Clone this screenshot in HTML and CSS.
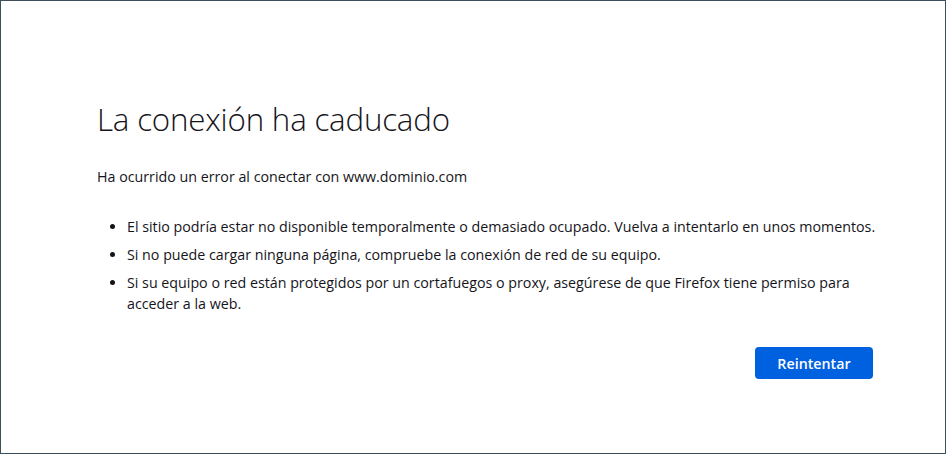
FILE: index.html
```html
<!DOCTYPE html>
<html lang="es">
<head>
<meta charset="utf-8">
<title>La conexión ha caducado</title>
<link rel="stylesheet" href="styles.css">
</head>
<body>
<div class="frame">
  <main class="container">
    <h1 class="title">La conexión ha caducado</h1>
    <p class="intro">Ha ocurrido un error al conectar con www.dominio.com</p>
    <ul class="tips">
      <li>El sitio podría estar no disponible temporalmente o demasiado ocupado. Vuelva a intentarlo en unos momentos.</li>
      <li>Si no puede cargar ninguna página, compruebe la conexión de red de su equipo.</li>
      <li>Si su equipo o red están protegidos por un cortafuegos o proxy, asegúrese de que Firefox tiene permiso para acceder a la web.</li>
    </ul>
    <div class="actions">
      <button class="retry" type="button">Reintentar</button>
    </div>
  </main>
</div>
</body>
</html>
```

FILE: styles.css
```css
html, body {
  margin: 0;
  padding: 0;
  background: #ffffff;
}

.frame {
  box-sizing: border-box;
  width: 946px;
  height: 454px;
  border: 1px solid #3e4f5b;
  background: #ffffff;
  font-family: "Open Sans", "Noto Sans", sans-serif;
  color: #15141a;
}

.container {
  width: 784px;
  margin-left: 96px;
  padding-top: 98px;
}

.title {
  margin: 0;
  font-size: 31.3px;
  font-weight: 300;
  line-height: 40px;
  letter-spacing: -0.2px;
}

.intro {
  margin: 27px 0 0;
  font-size: 14.25px;
  line-height: 21px;
}

.tips {
  margin: 29px 0 0;
  padding-left: 30px;
  font-size: 14.25px;
  line-height: 21px;
}

.tips li {
  margin-bottom: 7px;
}

.tips li:last-child {
  margin-bottom: 0;
}

.actions {
  display: flex;
  justify-content: flex-end;
  margin-top: 29px;
}

.retry {
  width: 118px;
  height: 32px;
  margin: 4px 8px;
  border: none;
  border-radius: 4px;
  background: #0061e0;
  color: #ffffff;
  font-family: "Open Sans", "Noto Sans", sans-serif;
  font-size: 14.25px;
  font-weight: 600;
  padding: 0;
}
```
